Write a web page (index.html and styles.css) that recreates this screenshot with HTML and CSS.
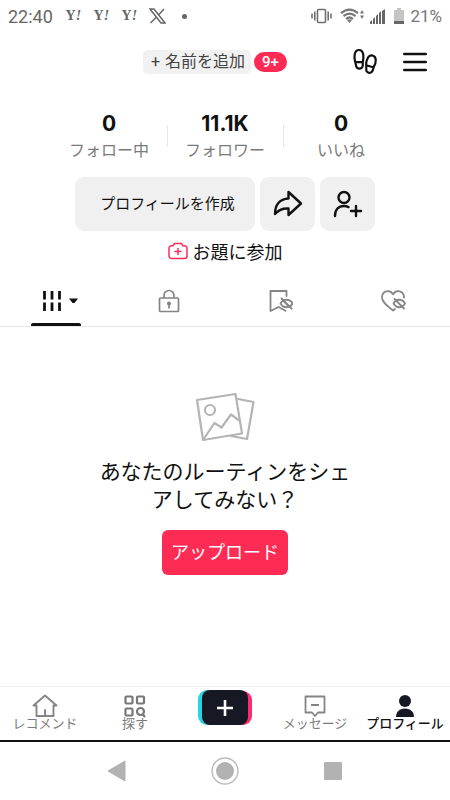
FILE: index.html
```html
<!DOCTYPE html>
<html lang="ja">
<head>
<meta charset="utf-8">
<meta name="viewport" content="width=device-width, initial-scale=1">
<title>プロフィール</title>
<link rel="stylesheet" href="styles.css">
</head>
<body>
<div class="status">
  <div class="status-left">
    <time class="clock">22:40</time>
    <span class="yahoo">Y<i>!</i></span>
    <span class="yahoo">Y<i>!</i></span>
    <span class="yahoo">Y<i>!</i></span>
    <svg class="x-logo" width="17" height="16" viewBox="0 0 17 16"><path d="M1 1h4l11 14h-4zM15 1 9.500 7M7 9.500 1.500 15" /></svg>
    <span class="dot"></span>
  </div>
  <div class="status-right">
    <svg width="21" height="16" viewBox="0 0 21 16" fill="none" stroke="#707070" stroke-width="1.600"><rect x="6.500" y="1.500" width="8" height="13" rx="1"/><path d="M3.800 3.500v9M1 5.500v5M17.200 3.500v9M20 5.500v5"/></svg>
    <svg class="wifi" width="24" height="16" viewBox="0 0 24 16"><g fill="none" stroke="#777" stroke-width="2.200"><path d="M1 5.200Q9.500-1.800 18 5.200M3.500 8.200Q9.500 3.200 15.500 8.200M6 11Q9.500 8 13 11"/></g><path fill="#777" d="M6.500 11.500h6l-3 3.500zM20 5.500l2-3.500 2 3.500zM20 7.500h4l-2 3.500z"/></svg>
    <svg class="signal" width="15" height="15" viewBox="0 0 15 15" fill="#666"><path d="M0 15v-2l2-2v4zM3 15v-5l2-2v7zM6 15V7l2-2v10zM9 15V4l2-2v13zM12 15V2l3-2v15z"/></svg>
    <svg class="battery" width="10" height="16" viewBox="0 0 10 16"><path fill="#c4c4c4" d="M3 0h4v2h3v11H0V2h3z"/><path fill="#666" d="M0 13h10v3H0z"/></svg>
    <span class="percent">21%</span>
  </div>
</div>

<header class="top">
  <div class="name-row">
    <button class="name"><span class="plus">+</span> 名前を追加</button>
    <span class="count">9+</span>
  </div>
  <div class="top-actions">
    <button class="plain" aria-label="足あと"><svg width="26" height="28" viewBox="0 0 26 28" fill="none" stroke="#111" stroke-width="2.200" stroke-linejoin="round"><path d="M3.200 14C2 10 1.800 2 7 2s4.800 8 3.800 12v3.200a3.200 3.200 0 0 1-6.800 0zM3.600 14.200h7.200"/><path d="M14.200 17.200C13.800 13 16 6.500 20.500 7.500s3.800 7.500 1.200 11.700l-1 3.200a3.200 3.200 0 0 1-6.400-1.700zM14.200 17.300l7 2"/></svg></button>
    <button class="plain" aria-label="メニュー"><svg width="24" height="20" viewBox="0 0 24 20" stroke="#111" stroke-width="2.400" stroke-linecap="round"><path d="M1.200 2h21.600M1.200 10h21.600M1.200 18h21.600"/></svg></button>
  </div>
</header>

<main>
  <section class="stats">
    <a class="stat" href="#"><strong>0</strong><span>フォロー中</span></a>
    <a class="stat" href="#"><strong>11.1K</strong><span>フォロワー</span></a>
    <a class="stat" href="#"><strong>0</strong><span>いいね</span></a>
  </section>

  <div class="actions">
    <button class="soft create">プロフィールを作成</button>
    <button class="soft square" aria-label="シェア"><svg width="30" height="28" viewBox="0 0 30 28" fill="none" stroke="#111" stroke-width="2.400" stroke-linejoin="round"><path d="M15.500 2 28 13.500 15.500 25v-6.500C9.500 18 5.500 20 2 24 2 15 6.500 9 15.500 8.500z"/></svg></button>
    <button class="soft square" aria-label="友達を追加"><svg width="30" height="28" viewBox="0 0 30 28" fill="none" stroke="#111" stroke-width="2.400" stroke-linecap="round"><circle cx="11" cy="7.500" r="5.500"/><path d="M2 26c0-6.500 3.500-10 9-10 1.800 0 3.200.4 4.500 1.100M18 21h10M23 16v10"/></svg></button>
  </div>

  <a class="prompt" href="#">
    <svg width="20" height="18" viewBox="0 0 20 18" fill="none" stroke="#fe2c55" stroke-width="1.500" stroke-linejoin="round" stroke-linecap="round"><path d="M6.500 1.500h7l1.500 2.300h1.500a2.500 2.500 0 0 1 2.500 2.500V14a2.500 2.500 0 0 1-2.500 2.500h-13A2.500 2.500 0 0 1 1 14V6.300a2.500 2.500 0 0 1 2.500-2.500H5zM10 6.500v6M7 9.500h6"/></svg>
    お題に参加
  </a>

  <nav class="tabs">
    <button class="tab selected" aria-label="投稿"><svg width="36" height="22" viewBox="0 0 36 22"><path d="M2.500 1v8.500M10 1v8.500M17.500 1v8.500M2.500 12.500V21M10 12.500V21M17.500 12.500V21" stroke="#111" stroke-width="2.800"/><path d="M27 8.500h9L32.500 13h-2z" fill="#111"/></svg></button>
    <button class="tab" aria-label="非公開"><svg width="22" height="24" viewBox="0 0 22 24" fill="none" stroke="#858585" stroke-width="1.700"><rect x="1.500" y="9" width="19" height="13.500" rx="1"/><path d="M6 9V6.500a5 5 0 0 1 10 0V9M11 15v4.500"/><circle cx="11" cy="14.500" r="1.200" fill="#858585"/></svg></button>
    <button class="tab" aria-label="セーブ済み"><svg width="24" height="22" viewBox="0 0 24 22" fill="none" stroke="#858585" stroke-width="1.800" stroke-linejoin="round" stroke-linecap="round"><path d="M17.500 6V1H1.500v20L9.500 17l7 3.800"/><path d="M11.500 13.500c3-5 9-5 12 0-3 5-9 5-12 0zM12.500 8.500l10 10M15 11.500l5 5"/></svg></button>
    <button class="tab" aria-label="いいね"><svg width="25" height="22" viewBox="0 0 25 22" fill="none" stroke="#858585" stroke-width="1.800" stroke-linejoin="round" stroke-linecap="round"><path d="M12 20.500C6 16 1 12 1 7.500 1 1 8.500-1 12 4.200 15.500-1 23 1 23 7.500M12 20.500l2-1.500"/><path d="M12.500 13.500c3-5 8.500-5 11.500 0-3 5-8.500 5-11.500 0zM13.500 9l9.500 9.500"/></svg></button>
  </nav>

  <section class="empty">
    <svg width="60" height="50" viewBox="0 0 60 50" fill="none" stroke="#b4b4b4" stroke-width="2.200" stroke-linejoin="round" stroke-linecap="round"><path d="M2 8 40.500 2 47 41.500 8 48z"/><circle cx="15" cy="18" r="5"/><path d="M9 46.500 19.500 31l7 4.500L36 22.500l9 6.500M43 7l15.500 3L52 47l-16-3"/></svg>
    <p>あなたのルーティンをシェアしてみない？</p>
    <button class="upload">アップロード</button>
  </section>
</main>

<nav class="bottom">
  <a class="item" href="#"><svg width="26" height="24" viewBox="0 0 26 24" fill="none" stroke="#858585" stroke-width="1.900" stroke-linejoin="round" stroke-linecap="round"><path d="M1.500 11.500 13 1.500l11.500 10h-3V22h-17V11.500zM13 16v5.500"/></svg><span>レコメンド</span></a>
  <a class="item" href="#"><svg width="22" height="24" viewBox="0 0 22 24" fill="none" stroke="#777" stroke-width="2.200"><rect x="1.500" y="2.500" width="7" height="7" rx="1"/><rect x="13" y="2.500" width="7" height="7" rx="1"/><rect x="1.500" y="14.500" width="7" height="7" rx="1"/><circle cx="16.500" cy="17.500" r="3.500"/><path d="m18.500 20 2.500 3"/></svg><span>探す</span></a>
  <a class="item" href="#" aria-label="作成"><svg width="54" height="36" viewBox="0 0 54 36"><rect width="40" height="35" rx="9" fill="#25d7e5"/><rect x="14" y="1" width="40" height="34" rx="9" fill="#fe2c6d"/><rect x="4" width="46" height="35" rx="8" fill="#161823"/><path d="M19 18h16M27 10v16" stroke="#fff" stroke-width="2.600"/></svg></a>
  <a class="item" href="#"><svg width="22" height="24" viewBox="0 0 22 24" fill="none" stroke="#858585" stroke-width="1.800" stroke-linejoin="round"><path d="M1.500 2.500h19v16H14l-3 3.500-3-3.500H1.500zM7 11h8"/></svg><span>メッセージ</span></a>
  <a class="item current" href="#"><svg width="20" height="24" viewBox="0 0 20 24" fill="#161823"><circle cx="10" cy="7" r="6"/><path d="M1 23c0-5 3.500-8.500 9-8.500s9 3.500 9 8.500z"/></svg><span>プロフィール</span></a>
</nav>

<div class="system">
  <button class="plain" aria-label="戻る"><svg width="20" height="22" viewBox="0 0 20 22"><path d="M1 11 18 1v20z" fill="#b2b2b2" stroke="#b2b2b2" stroke-linejoin="round"/></svg></button>
  <button class="plain" aria-label="ホーム"><svg width="28" height="28" viewBox="0 0 28 28"><circle cx="14" cy="14" r="13" fill="none" stroke="#bbb" stroke-width="1.400"/><circle cx="14" cy="14" r="9" fill="#b2b2b2"/></svg></button>
  <button class="plain" aria-label="アプリ履歴"><svg width="20" height="20" viewBox="0 0 20 20"><rect x="1" y="1" width="18" height="18" rx="1" fill="#b2b2b2"/></svg></button>
</div>
</body>
</html>
```
FILE: styles.css
```css
* { box-sizing: border-box; }

body {
  margin: 0;
  min-height: 100vh;
  display: flex;
  flex-direction: column;
  background: #fff;
  color: #111;
  font-family: Roboto, "Noto Sans CJK JP", sans-serif;
}

button {
  border: 0;
  padding: 0;
  background: none;
  color: inherit;
  font: inherit;
}

a { color: inherit; text-decoration: none; }
svg { display: block; flex: none; }

.status {
  display: flex;
  justify-content: space-between;
  height: 32px;
  padding: 0 8px;
  color: #666;
}

.status-left, .status-right { display: flex; align-items: center; }
.status-left { gap: 11px; }
.clock { font-size: 18px; margin-right: 1px; }
.yahoo { font: bold 14px/16px "Liberation Serif", serif; width: 17px; text-align: center; }
.x-logo { fill: none; stroke: #666; stroke-width: 1.5; }
.dot { width: 5px; height: 5px; margin-left: 5px; border-radius: 50%; background: #666; }
.wifi { margin-left: 8px; }
.signal { margin-left: 6px; }
.battery { margin-left: 9px; }
.percent { margin-left: 6px; font-size: 17px; color: #777; }

.top {
  display: grid;
  grid-template-columns: 1fr auto 1fr;
  align-items: center;
  height: 60px;
  padding: 0 23px 0 3px;
}

.name-row { grid-column: 2; display: flex; align-items: center; gap: 3px; }

.name {
  height: 24px;
  padding: 0 6px 0 8px;
  border-radius: 5px;
  background: #f1f1f1;
  color: #444;
  font-size: 16px;
  line-height: 22px;
  white-space: nowrap;
}
.plus { margin-right: 1px; }

.count {
  padding: 0 8px;
  border-radius: 10px;
  background: #fe2c55;
  color: #fff;
  font-size: 15px;
  font-weight: 500;
  line-height: 20px;
}

.top-actions { display: flex; justify-content: flex-end; align-items: center; gap: 25px; }

.stats {
  display: grid;
  grid-template-columns: repeat(3, 116px);
  justify-content: center;
  padding-top: 18px;
}

.stat { position: relative; display: flex; flex-direction: column; align-items: center; }
.stat + .stat::before {
  content: "";
  position: absolute;
  left: 0;
  top: 15px;
  height: 22px;
  border-left: 1px solid #e8e8e8;
}
.stat strong { font: bold 21px/27px Inter, sans-serif; }
.stat span { font-size: 16px; line-height: 28px; color: #7b7b7b; }

.actions { display: flex; justify-content: center; gap: 5px; margin-top: 12px; }
.soft { height: 54px; border-radius: 9px; background: #f0f0f0; }
.create { width: 180px; font-size: 15px; padding: 0 0 4px 5px; }
.square { display: grid; place-items: center; width: 55px; }

.prompt {
  display: flex;
  justify-content: center;
  align-items: center;
  gap: 5px;
  height: 40px;
  font-size: 18px;
}

.tabs {
  display: grid;
  grid-template-columns: repeat(4, 1fr);
  height: 56px;
  border-bottom: 1px solid #e8e8e8;
}

.tab { position: relative; display: grid; place-items: center; padding-top: 4px; }
.tab.selected { padding-left: 8px; }
.tab.selected::after {
  content: "";
  position: absolute;
  left: 50%;
  bottom: 0;
  width: 50px;
  height: 3px;
  margin-left: -25px;
  border-radius: 2px 2px 0 0;
  background: #111;
}

.empty { display: flex; flex-direction: column; align-items: center; padding-top: 65px; }
.empty p { width: 256px; margin: 16px 0; font-size: 21px; line-height: 28px; text-align: center; }

.upload {
  height: 45px;
  padding: 0 9px 4px;
  border-radius: 6px;
  background: #fe2c55;
  color: #fff;
  font-size: 18px;
}

.bottom {
  display: grid;
  grid-template-columns: repeat(5, 1fr);
  height: 56px;
  margin-top: auto;
  padding-top: 3px;
  border-top: 1px solid #eee;
  border-bottom: 2px solid #111;
}

.item { display: flex; flex-direction: column; align-items: center; padding-top: 4px; color: #7b7b7b; }
.item:nth-child(3) { padding-top: 0; }
.item span { margin-top: -1px; font-size: 13px; line-height: 14px; white-space: nowrap; }
.item.current { color: #111; font-weight: 500; }

.system { display: flex; justify-content: center; align-items: center; gap: 84px; height: 58px; }
```
